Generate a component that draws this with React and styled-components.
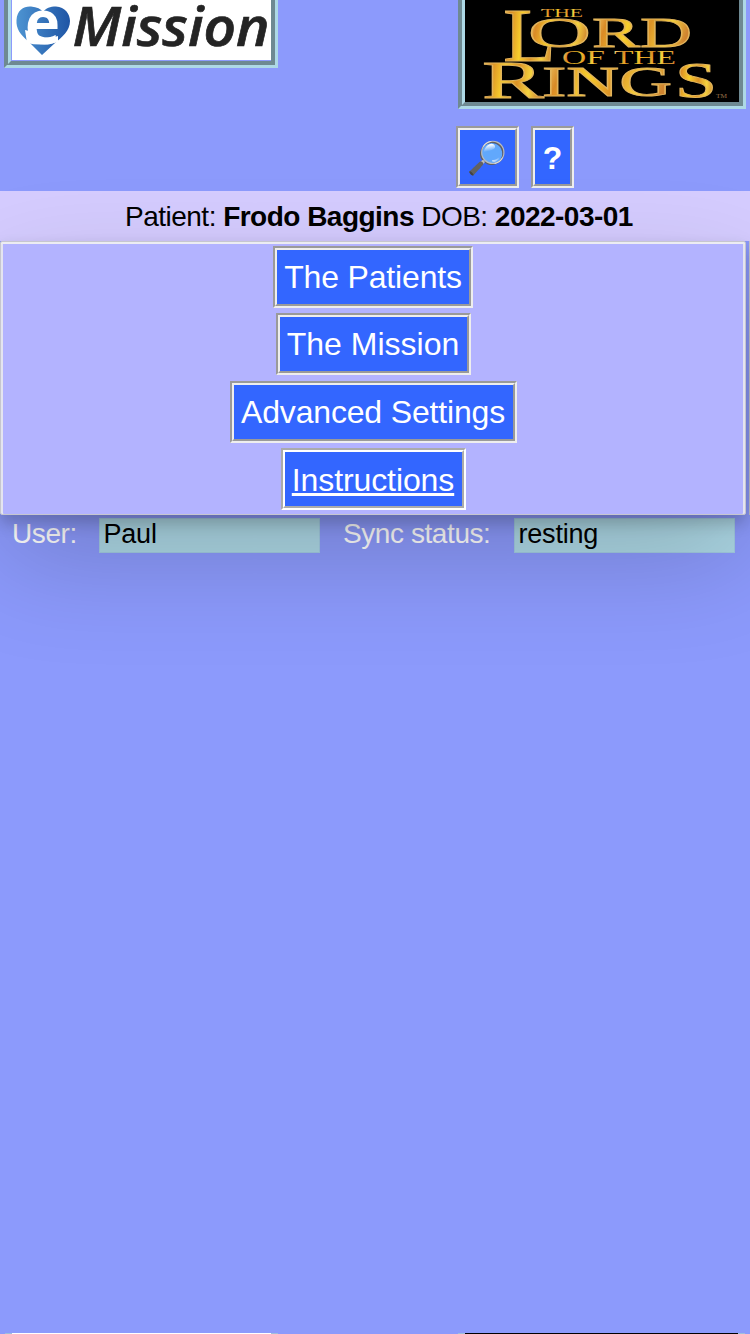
import React from "react";
import styled, { createGlobalStyle } from "styled-components";

const GlobalStyle = createGlobalStyle`
  html, body { margin: 0; padding: 0; background: #8c9afc; }
  body { font-family: "Liberation Sans", Arial, sans-serif; overflow: hidden; }
  * { box-sizing: border-box; }
`;

const Page = styled.div`
  display: flex;
  flex-direction: column;
  width: 750px;
  height: 1334px;
  overflow: hidden;
  background: #8c9afc;
`;

const Header = styled.header`
  display: flex;
  justify-content: space-between;
  align-items: flex-start;
  height: 126px;
  padding: 0 4px;
`;

const LogoFrame = styled.div`
  width: ${(p) => p.$width}px;
  height: ${(p) => p.$height}px;
  border: 7px groove lightblue;
  border-top: 0;
  padding: ${(p) => p.$inset};
  svg { display: block; width: 100%; height: 100%; background: ${(p) => p.$paper}; }
`;

const Toolbar = styled.div`
  display: flex;
  gap: 12px;
  height: 65px;
  padding-left: 456px;
`;

const Button = styled.button`
  display: flex;
  align-items: center;
  justify-content: center;
  flex: none;
  width: ${(p) => p.$width}px;
  height: 62px;
  padding: ${(p) => p.$drop ?? 2}px 0 0;
  border: 4px groove ${(p) => (p.$link ? "#ffffff" : "#eeeeee")};
  background: #3366ff;
  color: #fff;
  font: ${(p) => (p.$bold ? "bold" : "normal")} 32px "Liberation Sans", Arial, sans-serif;
  letter-spacing: ${(p) => p.$tracking || 0}px;
  white-space: nowrap;
  text-decoration: ${(p) => (p.$link ? "underline" : "none")};
`;

const Glyph = styled.span`
  font-family: "Noto Color Emoji", sans-serif;
  font-size: 32px;
  line-height: 40px;
`;

const PatientBar = styled.div`
  height: 50px;
  flex: none;
  background: #d5ccff;
  text-align: center;
  font-size: 28px;
  line-height: 51px;
  letter-spacing: -0.52px;
  padding-left: 8px;
`;

const MenuRow = styled.div`
  display: flex;
  gap: 3px;
  flex: none;
  height: 274px;
`;

const Menu = styled.nav`
  position: relative;
  z-index: 1;
  display: flex;
  flex-direction: column;
  align-items: center;
  gap: 5.6px;
  flex: none;
  width: 746px;
  padding-top: 3.500px;
  border: 1px solid #c6c6cf;
  border-radius: 2px;
  background: #b3b3ff;
  box-shadow:
    inset 0 2px #ececf2,
    inset 2px 0 #e4e4f0,
    inset -2px 0 #e4e4f0,
    0 8px 16px rgba(0, 0, 0, 0.2),
    0 44px 110px rgba(0, 0, 0, 0.19);
`;

const NextMenu = styled.div`
  flex: none;
  width: 20px;
  border: 1px solid #c6c6cf;
`;

const StatusRow = styled.div`
  display: flex;
  padding: 3px 0 0 12px;
  font-size: 28px;
  line-height: 32px;
`;

const Label = styled.label`
  flex: none;
  width: ${(p) => p.$width}px;
  color: #fff;
  letter-spacing: -0.42px;
`;

const Value = styled.div`
  flex: none;
  width: 221px;
  height: 35px;
  margin-right: 23px;
  padding-left: 3.500px;
  border: 1px solid #a2cbe2;
  background: #add8e6;
  color: #000;
  font-size: 27px;
  line-height: 31px;
  letter-spacing: -0.2px;
`;

const Spacer = styled.div`
  flex: 1;
`;

const NextLogos = styled.div`
  display: flex;
  justify-content: space-between;
  height: 1px;
  padding: 0 5px;
`;

const LogoEdge = styled.div`
  width: ${(p) => p.$width}px;
  border: solid #9fbfdc;
  border-width: 0 7px;
  background: ${(p) => p.$paper};
`;

function MissionLogo() {
  return (
    <svg viewBox="12 0 259 60" preserveAspectRatio="none">
      <defs>
        <linearGradient id="heart" x1="0" x2="1">
          <stop offset="0" stopColor="#4d94d2" />
          <stop offset="1" stopColor="#1f55a5" />
        </linearGradient>
      </defs>
      <path
        d="M42 55 L29 42 C20 34 16 29 16.500 20 C17 10 24 6 31 6.500 C37 7 41 9 43 12 C46 8 50 6.500 56 6.500 C65 7 70 14 70 21 C70 31 62 37 55 43 Z"
        fill="url(#heart)"
      />
      <path d="M25 30 L27 43 Q42 46.500 58 42 L58 36 Q45 41 33 32 Z" fill="#fff" />
      <text x="25" y="44" fontFamily="Open Sans" fontWeight="bold" fontSize="60" fill="#fff" textLength="35" lengthAdjust="spacingAndGlyphs">e</text>
      <text x="72.500" y="46" fontFamily="Open Sans" fontWeight="600" fontStyle="italic" fontSize="55" fill="#242424" stroke="#242424" strokeWidth="0.7" textLength="197" lengthAdjust="spacingAndGlyphs">Mission</text>
    </svg>
  );
}

const LETTERS = [
  ["THE", 541, 17, 13, 42],
  ["L", 503, 60, 76, 53],
  ["O", 528, 47, 42, 63],
  ["RD", 592, 46.5, 41, 100],
  ["OF", 562, 63.5, 18, 43],
  ["THE", 614, 63.5, 18, 62],
  ["R", 482, 97.5, 53, 62],
  ["ING", 542, 95.5, 41, 130],
  ["S", 675, 96.5, 51, 42],
];

function RingsLogo() {
  return (
    <svg viewBox="465 0 274 101" preserveAspectRatio="none">
      <defs>
        <linearGradient id="gold" x1="0" x2="1" y1="0" y2="0.15">
          <stop offset="0" stopColor="#f6df80" />
          <stop offset="0.18" stopColor="#d98a26" />
          <stop offset="0.4" stopColor="#f8cf2c" />
          <stop offset="0.62" stopColor="#dc9226" />
          <stop offset="0.82" stopColor="#f5d33e" />
          <stop offset="1" stopColor="#cf8430" />
        </linearGradient>
      </defs>
      {LETTERS.map(([text, x, y, size, length], i) => (
        <text
          key={i}
          x={x}
          y={y}
          fontFamily="Liberation Serif"
          fontSize={size}
          fill="url(#gold)"
          stroke={size > 30 ? "#e2b45c" : "none"}
          strokeWidth={size > 30 ? 0.9 : 0}
          textLength={length}
          lengthAdjust="spacingAndGlyphs"
        >
          {text}
        </text>
      ))}
      <text x="716" y="97" fontFamily="Liberation Serif" fontSize="5" fill="#9a7048" textLength="11" lengthAdjust="spacingAndGlyphs">TM</text>
    </svg>
  );
}

export default function App() {
  return (
    <Page>
      <GlobalStyle />
      <Header>
        <LogoFrame $width={274} $height={68} $inset="0 0 1px 1px" $paper="#fff">
          <MissionLogo />
        </LogoFrame>
        <LogoFrame $width={288} $height={109} $inset="0" $paper="#000">
          <RingsLogo />
        </LogoFrame>
      </Header>
      <Toolbar>
        <Button $width={63} aria-label="Search"><Glyph>🔎</Glyph></Button>
        <Button $width={43} $bold>?</Button>
      </Toolbar>
      <PatientBar>
        Patient: <b>Frodo Baggins</b> DOB: <b>2022-03-01</b>
      </PatientBar>
      <MenuRow>
        <Menu>
          <Button $width={200} $tracking={-0.17}>The Patients</Button>
          <Button $width={195} $drop={0.5}>The Mission</Button>
          <Button $width={287} $tracking={-0.17}>Advanced Settings</Button>
          <Button $width={185} $tracking={-0.1} $link>Instructions</Button>
        </Menu>
        <NextMenu />
      </MenuRow>
      <StatusRow>
        <Label $width={87}>User:</Label>
        <Value>Paul</Value>
        <Label $width={171}>Sync status:</Label>
        <Value>resting</Value>
      </StatusRow>
      <Spacer />
      <NextLogos>
        <LogoEdge $width={273} $paper="#fff" />
        <LogoEdge $width={287} $paper="#000" />
      </NextLogos>
    </Page>
  );
}
